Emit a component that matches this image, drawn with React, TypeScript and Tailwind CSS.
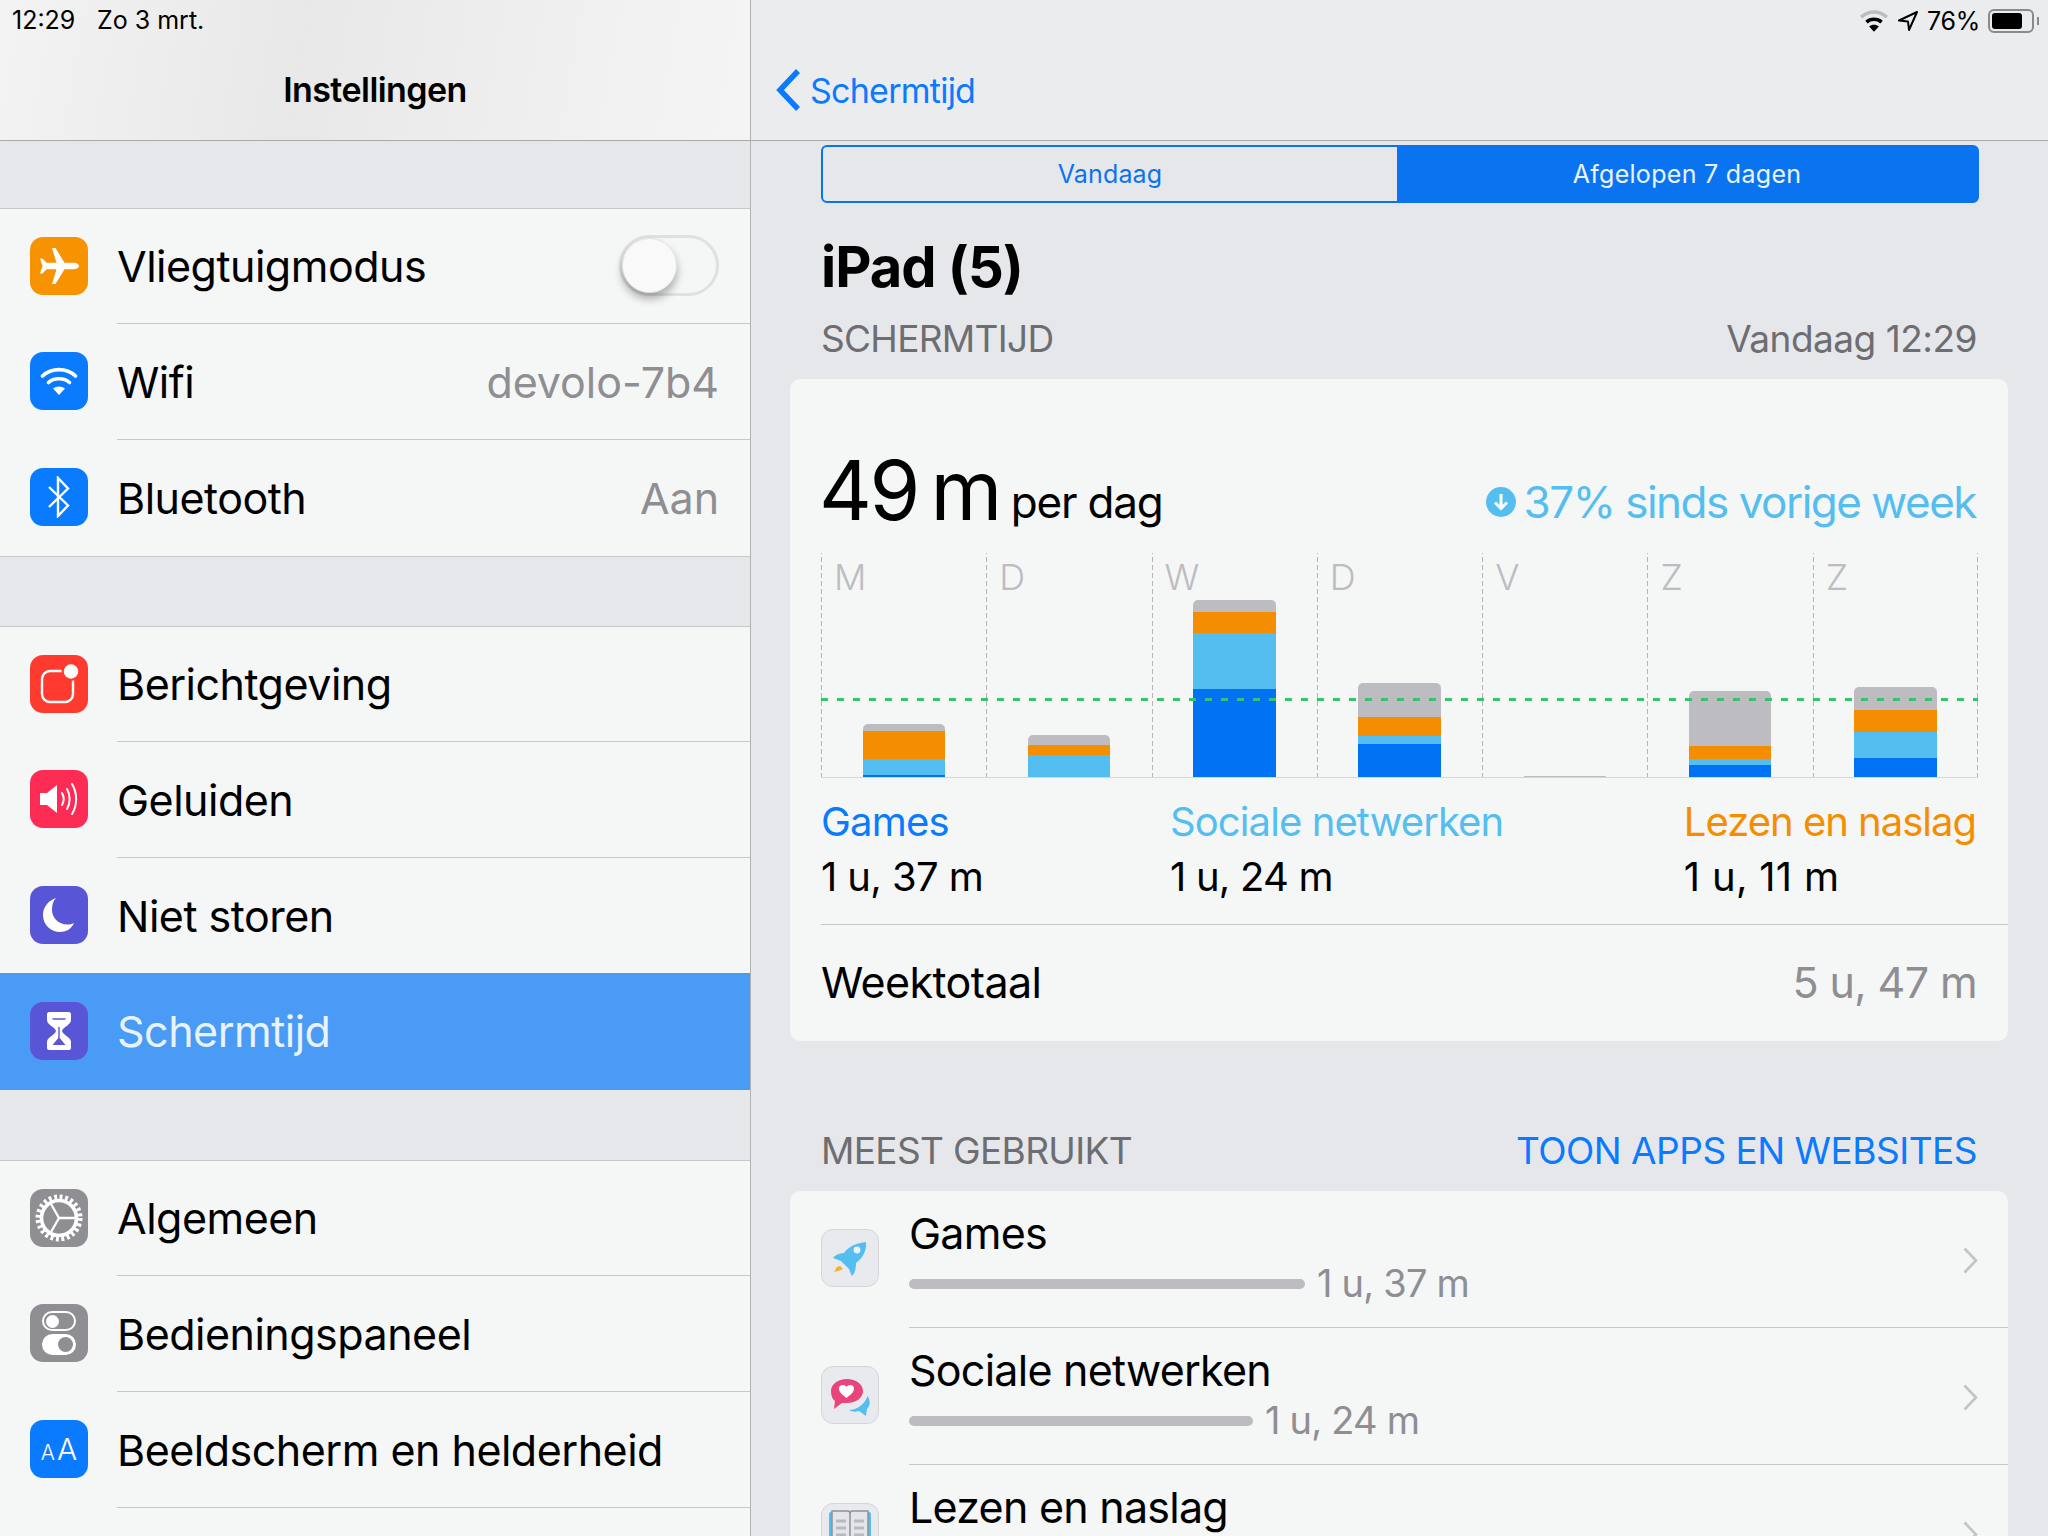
import React from "react";

const F = { fontFamily: "Inter, 'Liberation Sans', sans-serif" };

function IconBox({ bg, children }: { bg: string; children: React.ReactNode }) {
  return (
    <div className={`w-[58px] h-[58px] mb-[2px] rounded-[13px] flex items-center justify-center shrink-0 ${bg}`}>
      {children}
    </div>
  );
}

const Plane = () => (
  <svg width="40" height="36" viewBox="0 0 40 36" fill="#fff">
    <path d="M13 0 L16.500 0 L25.500 14.800 L35 14.800 C38.500 14.800 40 16.800 40 18 C40 19.200 38.500 21.200 35 21.200 L25.500 21.200 L16.500 36 L13 36 L17.500 21.200 L7.500 21.200 L3.500 25.500 L1 25.500 L3.500 18 L1 10.500 L3.500 10.500 L7.500 14.800 L17.500 14.800 Z" />
  </svg>
);
const WifiI = () => (
  <svg width="38" height="30" viewBox="0 0 38 30" fill="none" stroke="#fff" strokeWidth="3.600" strokeLinecap="round">
    <path d="M2.500 10 C11.500 1.500 26.500 1.500 35.500 10" />
    <path d="M8.500 16.500 C14 11.500 24 11.500 29.500 16.500" />
    <path d="M19 29 L13 22.500 C16.500 19.800 21.500 19.800 25 22.500 Z" fill="#fff" stroke="none" />
  </svg>
);
const Bt = () => (
  <svg width="24" height="42" viewBox="0 0 24 42" fill="none" stroke="#fff" strokeWidth="2.400" strokeLinejoin="miter">
    <path d="M2 11 L21 29.500 L11 40 L11 2 L21 12.500 L2 31" />
  </svg>
);
const Notif = () => (
  <svg width="44" height="44" viewBox="0 0 44 44" fill="none">
    <rect x="5" y="9" width="31" height="31" rx="8" stroke="#fff" strokeWidth="2.400" />
    <circle cx="34" cy="9.500" r="9.500" fill="#ff3b30" />
    <circle cx="34" cy="9.500" r="7.200" fill="#fff" />
  </svg>
);
const Sound = () => (
  <svg width="40" height="36" viewBox="0 0 40 36" fill="none" stroke="#fff" strokeWidth="2" strokeLinecap="round">
    <path d="M1 12 L8 12 L18 4 L18 32 L8 24 L1 24 Z" fill="#fff" stroke="none" />
    <path d="M23 12 C25 15.500 25 20.500 23 24" />
    <path d="M28 8 C31.500 13.500 31.500 22.500 28 28" />
    <path d="M33 3 C38.500 12 38.500 24 33 33" />
  </svg>
);
const Moon = () => (
  <svg width="32" height="36" viewBox="0 0 32 36" fill="#fff">
    <path d="M13 1 C5 4 0 10 0 18 C0 28 8 35 17 35 C24 35 29 31 31 26 C20 31 9 23 9 13 C9 8 10 4 13 1 Z" />
  </svg>
);
const Hourglass = () => (
  <svg width="24" height="38" viewBox="0 0 24 38" fill="#fff">
    <path d="M2 0 H22 C23 0 24 1 24 2 V8 C24 13 16 15 15 19 C16 23 24 25 24 30 V36 C24 37 23 38 22 38 H2 C1 38 0 37 0 36 V30 C0 25 8 23 9 19 C8 15 0 13 0 8 V2 C0 1 1 0 2 0 Z" />
    <path d="M5 6 H19 L18 8 H6 Z" fill="#5856d6" opacity="0.75" />
    <path d="M11.300 15 H12.700 V26 L18.500 33 H5.500 L11.300 26 Z" fill="#5856d6" />
  </svg>
);
const Gear = () => (
  <svg width="48" height="48" viewBox="0 0 48 48" fill="none" stroke="#fff">
    <circle cx="24" cy="24" r="21" strokeWidth="5" strokeDasharray="2.900 2.598" />
    <circle cx="24" cy="24" r="17.500" strokeWidth="3.600" />
    <path d="M24 24 L24 8 M24 24 L38 32 M24 24 L10 32" strokeWidth="2.400" transform="rotate(90 24 24)" />
  </svg>
);
const Toggles = () => (
  <div className="flex flex-col gap-[3px] w-[34px]">
    <div className="h-[20px] rounded-full border-2 border-white flex items-center pl-[2px]">
      <div className="w-[13px] h-[13px] rounded-full bg-white" />
    </div>
    <div className="h-[21px] rounded-full bg-white flex items-center justify-end pr-[3px]">
      <div className="w-[15px] h-[15px] rounded-full bg-[#8e8e93]" />
    </div>
  </div>
);
const AA = () => (
  <div className="flex items-baseline text-white font-light leading-none">
    <span className="text-[21px]">A</span>
    <span className="text-[30px] ml-[2px]">A</span>
  </div>
);

type RowT = { label: string; icon: React.ReactNode; bg: string; value?: string; toggle?: boolean; sel?: boolean; last?: boolean; short?: boolean; flush?: boolean };

function Row({ label, icon, bg, value, toggle, sel, last, short, flush }: RowT) {
  return (
    <div className={`flex items-center pl-[30px] ${sel ? "h-[117px] bg-[#4a9bf5]" : short ? "h-[115px]" : "h-[116px]"}`}>
      <IconBox bg={bg}>{icon}</IconBox>
      <div className={`flex-1 h-full ml-[29px] pr-[31px] flex items-center justify-between ${last || sel ? "" : "border-b border-[#c8c8cc]"}`}>
        <span className={`text-[43px] tracking-[-0.5px] leading-none ${flush ? "" : "mt-[1px]"} ${sel ? "text-[#e8f3ff]" : "text-black"}`}>{label}</span>
        {value && <span className="text-[43px] tracking-[-0.05px] mt-[1px] leading-none text-[#8e8e93]">{value}</span>}
        {toggle && (
          <div className="w-[100px] h-[61px] mb-[2px] rounded-full border-[3px] border-[#e0e0e2] relative">
            <div className="absolute left-[0px] top-[0px] w-[55px] h-[55px] rounded-full bg-[#f9f9f9] border border-[#e4e4e6] shadow-[0_6px_8px_rgba(0,0,0,0.3)]" />
          </div>
        )}
      </div>
    </div>
  );
}

function Sidebar() {
  return (
    <aside className="w-[751px] shrink-0 h-full overflow-hidden bg-[#e6e7ea] border-r border-[#b2b2b2] flex flex-col">
      <header className="h-[141px] shrink-0 border-b border-[#a9a9ab] bg-[linear-gradient(100deg,#f3f3f3_0%,#e8e8e8_40%,#f1f1f1_80%,#f4f4f4_100%)] relative flex items-center justify-center">
        <span className="absolute left-[12px] top-[6px] text-[25px] leading-[28px] text-black">12:29</span>
        <span className="absolute left-[97px] top-[6px] text-[25px] leading-[28px] text-black">Zo 3 mrt.</span>
        <span className="text-[34px] font-semibold tracking-[-0.55px] text-black mt-[39px]">Instellingen</span>
      </header>
      <div className="h-[67px] shrink-0" />
      <section className="border-t border-[#c8c8cc] bg-[#f5f6f6]">
        <Row short flush label="Vliegtuigmodus" bg="bg-[#f79200]" icon={<Plane />} toggle />
        <Row label="Wifi" bg="bg-[#0a7aff]" icon={<WifiI />} value="devolo-7b4" />
        <Row label="Bluetooth" bg="bg-[#0a7aff]" icon={<Bt />} value="Aan" last />
      </section>
      <div className="h-[70px] shrink-0 border-t border-[#c8c8cc]" />
      <section className="border-t border-[#c8c8cc] bg-[#f5f6f6]">
        <Row short flush label="Berichtgeving" bg="bg-[#ff3b30]" icon={<Notif />} />
        <Row label="Geluiden" bg="bg-[#fd2c55]" icon={<Sound />} />
        <Row short label="Niet storen" bg="bg-[#5856d6]" icon={<Moon />} last />
        <Row flush label="Schermtijd" bg="bg-[#5856d6]" icon={<Hourglass />} sel />
      </section>
      <div className="h-[70px] shrink-0" />
      <section className="border-t border-[#c8c8cc] bg-[#f5f6f6] flex-1">
        <Row short flush label="Algemeen" bg="bg-[#8e8e93]" icon={<Gear />} />
        <Row label="Bedieningspaneel" bg="bg-[#8e8e93]" icon={<Toggles />} />
        <Row label="Beeldscherm en helderheid" bg="bg-[#0a7aff]" icon={<AA />} />
      </section>
    </aside>
  );
}

const days = [
  { d: "M", s: [7, 28, 16, 2] },
  { d: "D", s: [10, 10, 22, 0] },
  { d: "W", s: [12, 21, 56, 88] },
  { d: "D", s: [34, 19, 8, 33] },
  { d: "V", s: [1, 0, 0, 0] },
  { d: "Z", s: [55, 13, 6, 12] },
  { d: "Z", s: [23, 22, 26, 19] },
];

const dashV = "bg-[linear-gradient(#b5b5b9_60%,transparent_60%)] bg-[length:1px_8px] bg-repeat-y bg-left";

function Chart() {
  const cols = ["bg-[#bcbcc1]", "bg-[#f58d00]", "bg-[#55bef0]", "bg-[#0073f5]"];
  return (
    <div className="relative w-[1157px] h-[225px] grid grid-cols-7 border-b border-[#d6d6d9]">
      {days.map((x, i) => (
        <div key={i} className={`flex flex-col justify-between ${dashV}`}>
          <span className="pl-[13px] pt-[4px] text-[36px] font-light leading-[40px] text-[#bcbcc1]">{x.d}</span>
          <div className="ml-[41.500px] w-[82.500px] rounded-t-[5px] overflow-hidden flex flex-col">
            {x.s.map((h, j) => (h > 0 ? <div key={j} className={cols[j]} style={{ height: h }} /> : null))}
          </div>
        </div>
      ))}
      <div className={`absolute right-0 top-0 bottom-0 w-px ${dashV}`} />
      <div className="absolute left-0 right-0 top-[145px] h-[3px] bg-[repeating-linear-gradient(90deg,#35c467_0_7px,transparent_7px_16px)]" />
    </div>
  );
}

const Rocket = () => (
  <svg width="56" height="56" viewBox="1 1 56 56">
    <path d="M45 13 C36 14 28 17 23 24 C18 24.500 14 26 12 29 L20 32 L28 40 C29 43 30 45 31 47 C34 44 35 40 35 34 C42 29 46 21 45 13 Z" fill="#55bef0" />
    <circle cx="36" cy="21" r="3.400" fill="#eef0f2" />
    <path d="M13 43 L16 38 L19 37 L22 40 L20 41 Z" fill="#f5b21e" />
  </svg>
);
const Chat = () => (
  <svg width="56" height="56" viewBox="1 1 56 56">
    <path d="M28 44 C36 44 44 38 46.500 30 C50 35 49 40 46 43 L45 50 L38 45 C34 46 31 46 28 44 Z" fill="#55bef0" />
    <path d="M26 13 C35 13 42 18 42 25 C42 32 35 37 26 37 L21 37 L13 43 L14 35 C11 33 10 29 10 25 C10 18 17 13 26 13 Z" fill="#e8457c" />
    <path d="M25.500 32 C20.500 28 18 26 18 22.500 C18 18.500 23.500 18 25.500 21 C27.500 18 33 18.500 33 22.500 C33 26 30.500 28 25.500 32 Z" fill="#fff" />
  </svg>
);
const Book = () => (
  <svg width="42" height="46" viewBox="0 0 42 46">
    <rect x="0" y="3" width="42" height="38" rx="2" fill="#55bef0" />
    <path d="M3 2 H19 C20 2 21 3 21 5 V40 H3 Z M39 2 H23 C22 2 21 3 21 5 V40 H39 Z" fill="#e4e5e8" stroke="#8e9196" strokeWidth="1.500" />
    <path d="M7 12 H17 M7 19 H17 M7 26 H17 M25 12 H35 M25 19 H35 M25 26 H35" stroke="#b9babd" strokeWidth="3" />
  </svg>
);
const Chev = () => (
  <svg width="15" height="27" viewBox="0 0 15 27" fill="none" stroke="#c3c3c8" strokeWidth="2.600">
    <path d="M1.500 1.500 L13 13.500 L1.500 25.500" />
  </svg>
);

function AppRow({ title, time, w, icon, last }: { title: string; time?: string; w?: number; icon: React.ReactNode; last?: boolean }) {
  return (
    <div className="flex items-start h-[137px] pl-[31px]">
      <div className="w-[58px] h-[58px] mt-[38px] rounded-[12px] bg-[#e9eaed] border border-[#d5d5d8] overflow-hidden flex items-center justify-center shrink-0">
        {icon}
      </div>
      <div className={`flex-1 h-full ml-[30px] pr-[30px] flex items-start justify-between ${last ? "" : "border-b border-[#c8c8cc]"}`}>
        <div className="flex flex-col">
          <span className="text-[43px] tracking-[-0.75px] leading-[50px] mt-[17px] text-black">{title}</span>
          {time && (
            <div className="flex items-center gap-[12px] mt-[3px]">
              <div className="h-[10px] mt-[2px] rounded-full bg-[#bcbcc1]" style={{ width: w }} />
              <span className="text-[38px] tracking-[-0.8px] leading-[44px] text-[#8e8e93]">{time}</span>
            </div>
          )}
        </div>
        <div className="mt-[56px]"><Chev /></div>
      </div>
    </div>
  );
}

function Detail() {
  return (
    <main className="flex-1 h-full overflow-hidden bg-[#e6e7ea] flex flex-col">
      <header className="h-[141px] shrink-0 bg-[#ebecee] border-b border-[#a9a9ab] relative">
        <div className="absolute right-[9px] top-[7px] flex items-center text-black">
          <svg width="28" height="22" viewBox="0 0 26 20" fill="none" strokeWidth="3.400" className="mr-[9px]">
            <path d="M1 6.500 C8 0 18 0 25 6.500" stroke="#bdbdbd" />
            <path d="M6 11 C10 7.500 16 7.500 20 11" stroke="#000" />
            <path d="M13 20 L8.500 15 C11 13 15 13 17.500 15 Z" fill="#000" />
          </svg>
          <svg width="22" height="22" viewBox="0 0 22 22" fill="none" stroke="#000" strokeWidth="2" className="mr-[8px]">
            <path d="M20 2 L2 10.500 L11 11.500 L12 20 Z" strokeLinejoin="round" />
          </svg>
          <span className="text-[25px] leading-[28px] tracking-[-0.3px] mr-[8px]">76%</span>
          <div className="w-[46px] h-[24px] rounded-[6px] border-2 border-[#8a8a8a] p-[2px]">
            <div className="h-full w-[30px] rounded-[3px] bg-black" />
          </div>
          <div className="w-[2px] h-[8px] bg-[#8a8a8a] ml-[3px]" />
        </div>
        <div className="absolute left-[24px] top-[70px] flex items-center h-[40px]">
          <svg width="26" height="42" viewBox="0 0 26 42" fill="none" stroke="#0a7aff" strokeWidth="5.500">
            <path d="M23 2 L5 21 L23 40" />
          </svg>
          <span className="ml-[9px] text-[34px] tracking-[-0.75px] text-[#0a7aff]">Schermtijd</span>
        </div>
      </header>

      <div className="pl-[70px] pr-[69px] pt-[4px]">
        <div className="flex h-[58px] rounded-[6px] border-2 border-[#0a74f0]">
          <div className="w-[574px] flex items-center justify-center text-[25px] tracking-[0.15px] pt-[2px] text-[#0a74f0]">Vandaag</div>
          <div className="flex-1 bg-[#0a74f0] flex items-center justify-center text-[25px] tracking-[0.3px] pt-[2px] text-[#eaf3ff]">Afgelopen 7 dagen</div>
        </div>
        <h1 className="mt-[32px] text-[56px] leading-[64px] font-bold tracking-[-1px] text-black">iPad (5)</h1>
        <div className="mt-[18px] pr-[2px] flex justify-between items-center text-[37px] leading-[44px] tracking-[-0.5px] text-[#6d6d72]">
          <span className="tracking-[-0.7px]">SCHERMTIJD</span>
          <span>Vandaag 12:29</span>
        </div>
      </div>

      <section className="mt-[18px] ml-[39px] mr-[40px] h-[662px] shrink-0 rounded-[10px] bg-[#f5f6f6] pl-[31px]">
        <div className="h-[174px] flex items-end justify-between pr-[32px] pb-[18px]">
          <div className="flex items-baseline text-black">
            <span className="text-[82px] leading-[90px] tracking-[-2.500px] [word-spacing:-8px] -ml-[2px] translate-y-[2px]">49 m</span>
            <span className="ml-[11px] text-[44px] tracking-[-1.200px]">per dag</span>
          </div>
          <div className="flex items-center text-[#55bef0] mb-[7px]">
            <svg width="30" height="30" viewBox="0 0 30 30" className="mr-[8px]">
              <circle cx="15" cy="15" r="15" fill="#55bef0" />
              <path d="M15 7 V21 M9 15.500 L15 21.500 L21 15.500" fill="none" stroke="#fff" strokeWidth="3" />
            </svg>
            <span className="text-[44px] leading-[52px] tracking-[-1.500px]">37% sinds vorige week</span>
          </div>
        </div>
        <Chart />
        <div className="flex pr-[32px] mt-[19px]">
          <div className="w-[349px]">
            <div className="text-[40px] leading-[50px] tracking-[-0.8px] text-[#0a7aff]">Games</div>
            <div className="text-[40px] leading-[50px] tracking-[-0.6px] text-black mt-[5px]">1 u, 37 m</div>
          </div>
          <div className="flex-1">
            <div className="text-[40px] leading-[50px] tracking-[-0.9px] text-[#55bef0]">Sociale netwerken</div>
            <div className="text-[40px] leading-[50px] tracking-[-0.8px] text-black mt-[5px]">1 u, 24 m</div>
          </div>
          <div>
            <div className="text-[40px] leading-[50px] tracking-[-1px] text-[#f58d00]">Lezen en naslag</div>
            <div className="text-[40px] leading-[50px] tracking-[0.3px] text-black mt-[5px]">1 u, 11 m</div>
          </div>
        </div>
        <div className="mt-[22px] border-t border-[#c8c8cc] h-[116px] flex items-center justify-between pr-[31px] text-[43px] tracking-[-0.6px]">
          <span className="text-black">Weektotaal</span>
          <span className="text-[#8e8e93]">5 u, 47 m</span>
        </div>
      </section>

      <div className="mt-[88px] pl-[70px] pr-[71px] flex justify-between items-center text-[37px] leading-[44px] tracking-[-0.65px]">
        <span className="text-[#6d6d72]">MEEST GEBRUIKT</span>
        <span className="tracking-[-0.5px] text-[#0a7aff]">TOON APPS EN WEBSITES</span>
      </div>

      <section className="mt-[18px] ml-[39px] mr-[40px] flex-1 rounded-t-[10px] bg-[#f5f6f6] overflow-hidden">
        <AppRow title="Games" time="1 u, 37 m" w={396} icon={<Rocket />} />
        <AppRow title="Sociale netwerken" time="1 u, 24 m" w={344} icon={<Chat />} />
        <AppRow title="Lezen en naslag" icon={<Book />} last />
      </section>
    </main>
  );
}

export default function App() {
  return (
    <div className="w-[2048px] h-[1536px] flex overflow-hidden" style={F}>
      <Sidebar />
      <Detail />
    </div>
  );
}
